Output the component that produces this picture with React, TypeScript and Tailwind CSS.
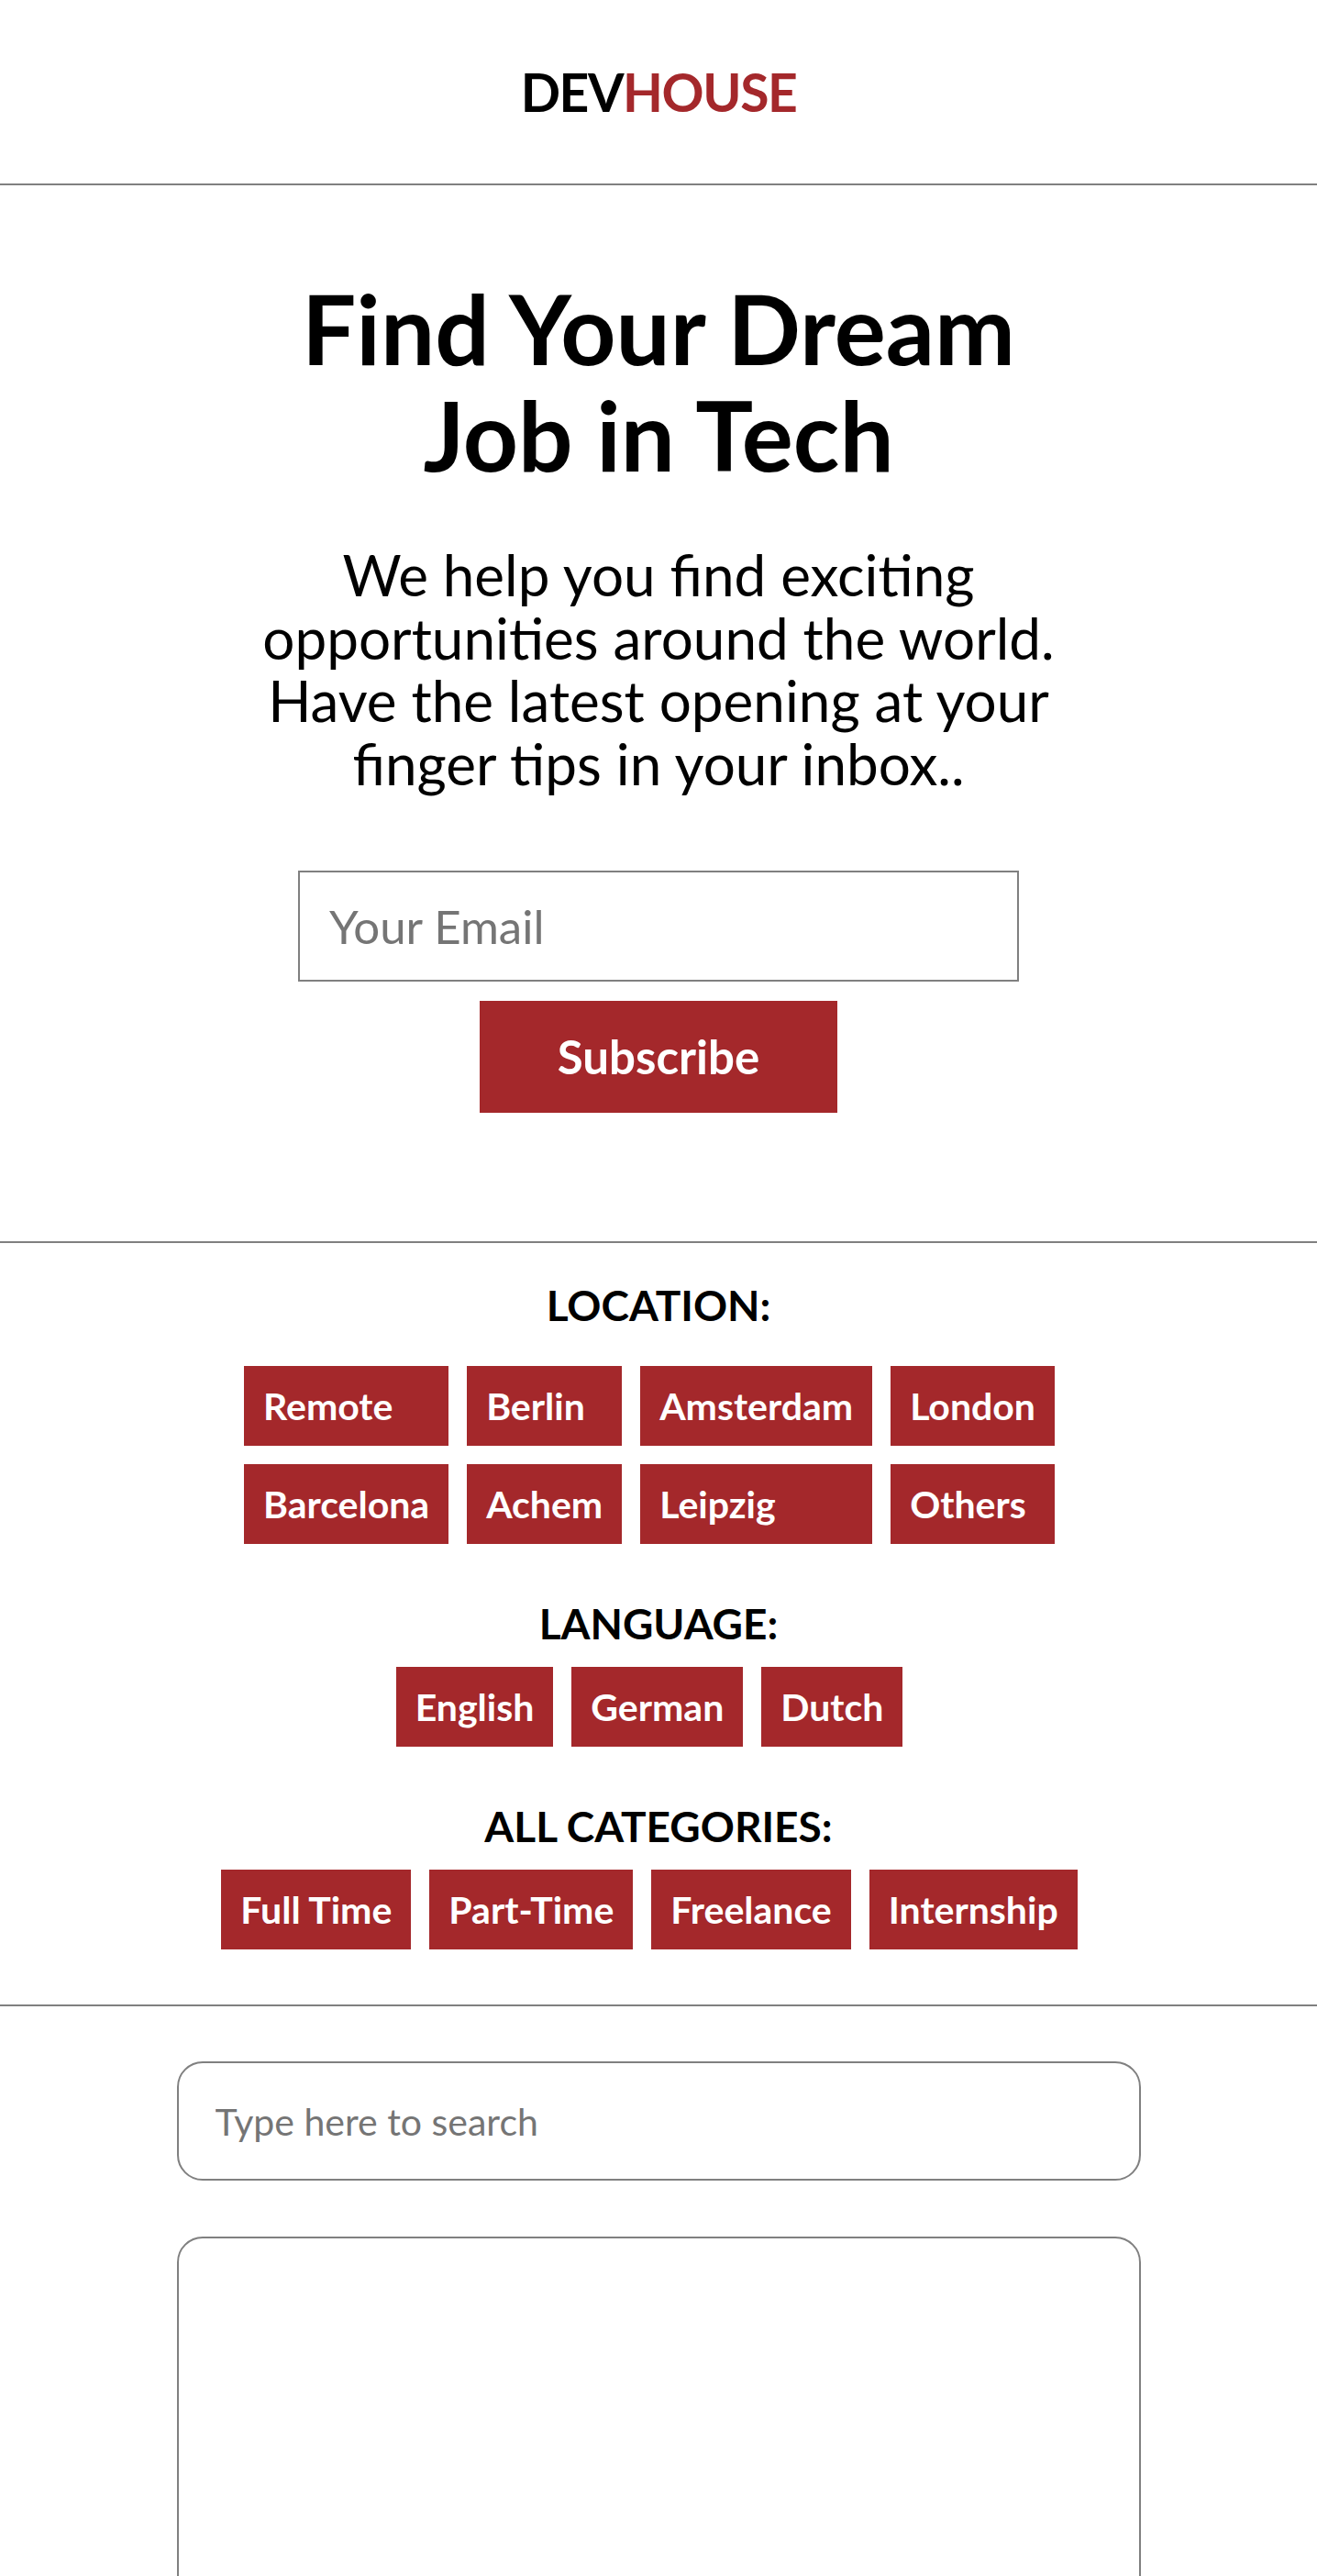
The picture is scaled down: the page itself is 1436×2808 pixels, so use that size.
import React from 'react';

const locations = ['Remote', 'Berlin', 'Amsterdam', 'London', 'Barcelona', 'Achem', 'Leipzig', 'Others'];
const languages = ['English', 'German', 'Dutch'];
const categories = ['Full Time', 'Part-Time', 'Freelance', 'Internship'];

const Tag: React.FC<{ label: string }> = ({ label }) => (
  <button className="h-[87px] mr-[20px] mb-[20px] px-[21px] flex items-center bg-[#a4282b] text-white font-bold text-[41px] leading-none text-left whitespace-nowrap">
    {label}
  </button>
);

export default function App() {
  return (
    <div className="min-h-screen bg-white text-black font-['Lato','Open_Sans',sans-serif]">
      {/* Header */}
      <header className="h-[202px] flex items-center justify-center border-b-2 border-[#808080]">
        <h1 className="text-[57px] font-bold tracking-tight leading-none">
          DEV<span className="text-[#a4282b]">HOUSE</span>
        </h1>
      </header>

      {/* Hero */}
      <section className="pt-[97px] pb-[140px] border-b-2 border-[#808080] flex flex-col items-center">
        <div className="max-w-[900px] text-center">
          <h2 className="text-[105px] leading-[116px] font-bold">Find Your Dream Job in Tech</h2>
          <p className="mt-[61px] text-[62px] leading-[68.5px]">
            We help you find exciting opportunities around the world. Have the latest opening at your finger tips in
            your inbox..
          </p>
        </div>
        <input
          type="email"
          placeholder="Your Email"
          className="mt-[83px] w-[786px] h-[121px] border-2 border-[#808080] px-[32px] text-[51px] placeholder:text-[#757575] outline-none"
        />
        <button className="mt-[21px] w-[390px] h-[122px] bg-[#a4282b] text-white font-bold text-[51px]">
          Subscribe
        </button>
      </section>

      {/* Filters */}
      <section className="pt-[40px] pb-[40px] border-b-2 border-[#808080] flex flex-col items-center">
        <h3 className="text-[46px] leading-[55px] font-bold">LOCATION:</h3>
        <div className="mt-[39px] grid grid-cols-[repeat(4,auto)] justify-center">
          {locations.map((l) => (
            <Tag key={l} label={l} />
          ))}
        </div>

        <h3 className="mt-[39px] text-[46px] leading-[55px] font-bold">LANGUAGE:</h3>
        <div className="mt-[20px] flex justify-center">
          {languages.map((l) => (
            <Tag key={l} label={l} />
          ))}
        </div>

        <h3 className="mt-[39px] text-[46px] leading-[55px] font-bold">ALL CATEGORIES:</h3>
        <div className="mt-[20px] flex justify-center">
          {categories.map((c) => (
            <Tag key={c} label={c} />
          ))}
        </div>
      </section>

      {/* Search + results */}
      <section className="pt-[60px] pb-[60px] flex flex-col items-center">
        <input
          type="text"
          placeholder="Type here to search"
          className="w-[1051px] h-[130px] rounded-[28px] border-2 border-[#808080] px-[40px] text-[41px] placeholder:text-[#757575] outline-none"
        />
        <div className="mt-[61px] w-[1051px] h-[600px] rounded-[28px] border-2 border-[#808080]" />
      </section>
    </div>
  );
}
